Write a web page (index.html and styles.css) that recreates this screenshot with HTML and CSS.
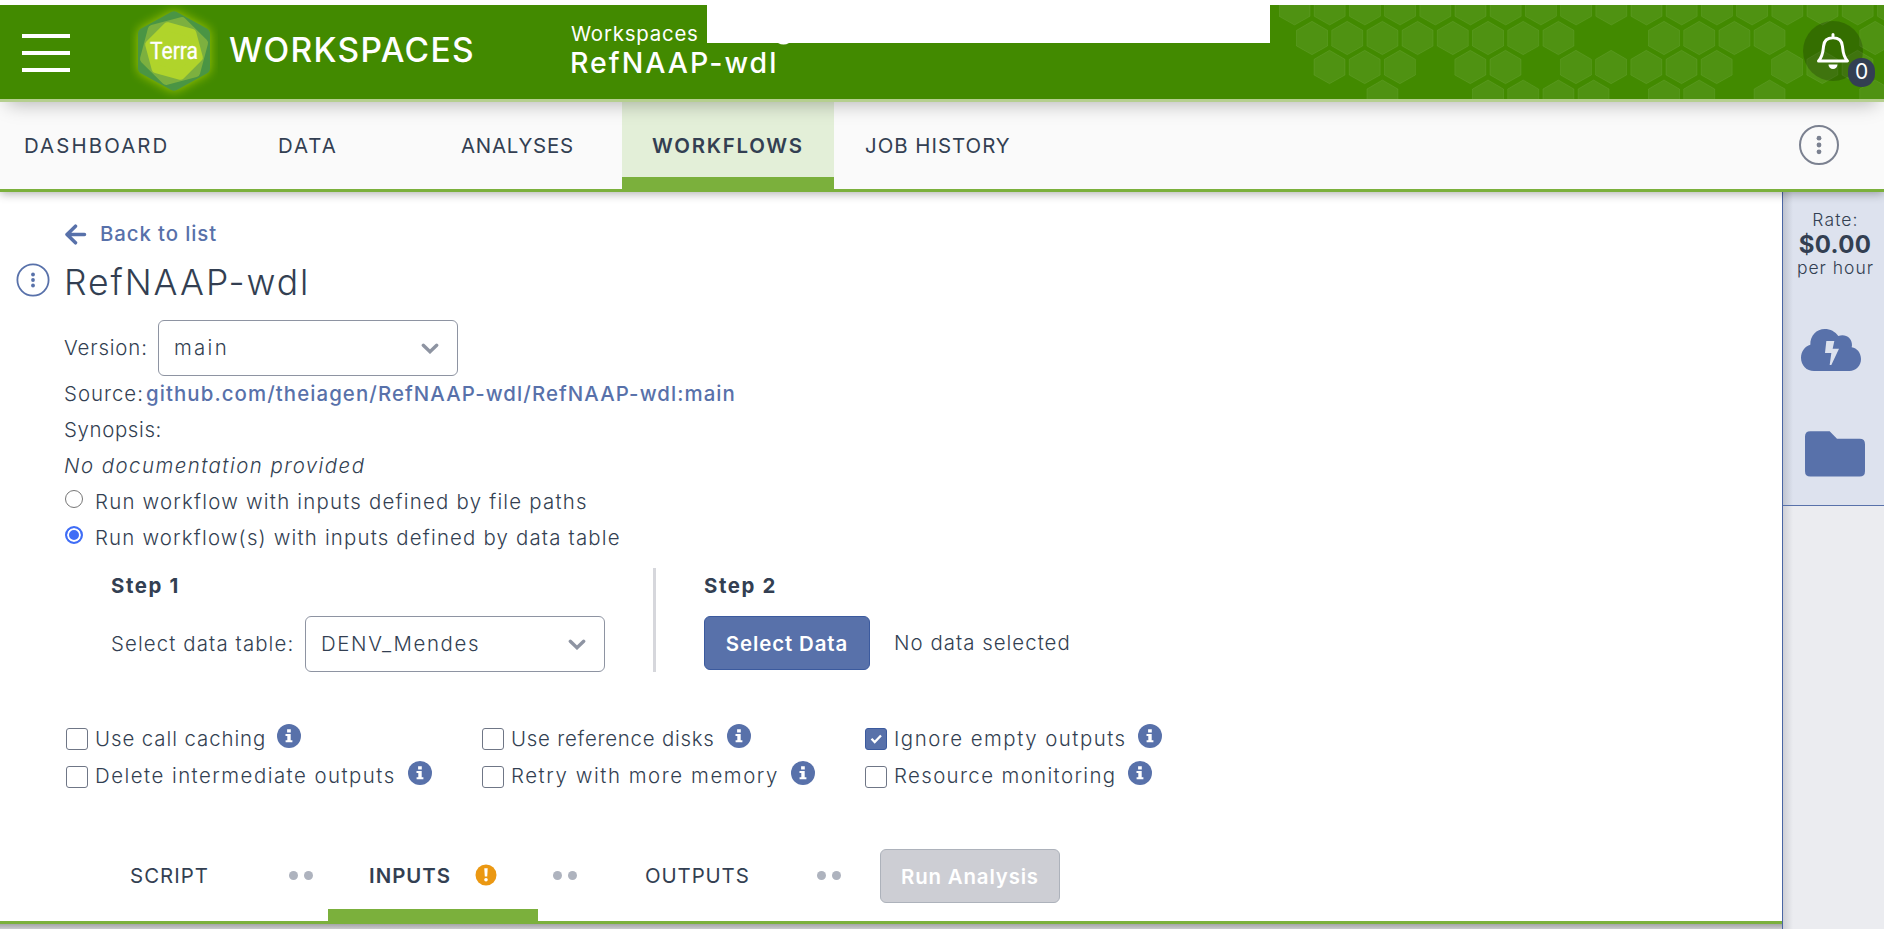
FILE: index.html
```html
<!DOCTYPE html>
<html lang="en">
<head>
<meta charset="utf-8">
<title>RefNAAP-wdl - Workflows</title>
<link rel="stylesheet" href="styles.css">
</head>
<body>
<svg class="defs" width="0" height="0">
  <defs>
    <path id="hex" d="M15.500 0L31 9V24.700L15.500 33.400L0 24.700V9Z"/>
    <g id="info"><circle cx="12" cy="12" r="12" fill="#5871aa"/><path fill="#fff" d="M10.100 5.300h3.700v3.200h-3.700zM8.500 10h5.200v6.200h1.700v2H8.600v-2h1.700V12H8.500z"/></g>
    <path id="chev" d="M2.300 2.300L9 8.700L15.700 2.300" fill="none" stroke="#8e94a2" stroke-width="3.400" stroke-linecap="round"/>
  </defs>
</svg>

<header class="topbar">
  <svg class="comb" width="605" height="94">
    <g transform="translate(0 -13.400)"><use href="#hex"/><use href="#hex" x="35.200"/><use href="#hex" x="70.400"/><use href="#hex" x="105.600"/><use href="#hex" x="140.800"/><use href="#hex" x="176"/><use href="#hex" x="211.200"/><use href="#hex" x="246.400"/><use href="#hex" x="281.600"/><use href="#hex" x="316.800"/><use href="#hex" x="352"/><use href="#hex" x="387.200"/><use href="#hex" x="422.400"/><use href="#hex" x="457.600"/><use href="#hex" x="492.800"/><use href="#hex" x="528"/><use href="#hex" x="563.200"/><use href="#hex" x="598.400"/></g>
    <g transform="translate(17.500 16.300)"><use href="#hex"/><use href="#hex" x="35.200"/><use href="#hex" x="70.400"/><use href="#hex" x="105.600"/><use href="#hex" x="140.800"/><use href="#hex" x="176"/><use href="#hex" x="211.200"/><use href="#hex" x="246.400"/><use href="#hex" x="352"/><use href="#hex" x="387.200"/><use href="#hex" x="422.400"/><use href="#hex" x="457.600"/><use href="#hex" x="563.200"/></g>
    <g transform="translate(35 45.300)"><use href="#hex"/><use href="#hex" x="35.200"/><use href="#hex" x="70.400"/><use href="#hex" x="140.800"/><use href="#hex" x="176"/><use href="#hex" x="246.400"/><use href="#hex" x="281.600"/><use href="#hex" x="316.800"/><use href="#hex" x="352"/><use href="#hex" x="387.200"/><use href="#hex" x="457.600"/><use href="#hex" x="492.800"/><use href="#hex" x="528"/></g>
    <g transform="translate(17.500 75)"><use href="#hex" x="70.400"/><use href="#hex" x="176"/><use href="#hex" x="211.200"/><use href="#hex" x="246.400"/><use href="#hex" x="281.600"/><use href="#hex" x="352"/><use href="#hex" x="387.200"/><use href="#hex" x="457.600"/><use href="#hex" x="563.200"/></g>
  </svg>
  <div class="burger"><i></i><i></i><i></i></div>
  <svg class="logo" width="88" height="94" viewBox="30 15 264 282">
    <g stroke-linejoin="round">
      <path class="glow" fill="#4a9544" stroke="#4a9544" stroke-width="36" d="M162 52L252 101V205L162 254L72 205V101Z"/>
      <path fill="#7cb03f" stroke="#7cb03f" stroke-width="28" transform="translate(162 153) rotate(15)" d="M0 -91L79 -45.500V45.500L0 91L-79 45.500V-45.500Z"/>
      <path fill="#b0d42b" stroke="#b0d42b" stroke-width="26" transform="translate(162 153) rotate(-15)" d="M0 -76L66 -38V38L0 76L-66 38V-38Z"/>
    </g>
    <text x="90" y="177" textLength="144" lengthAdjust="spacingAndGlyphs">Terra</text>
  </svg>
  <div class="section">WORKSPACES</div>
  <div class="crumb">
    <div class="crumb-top">Workspaces</div>
    <div class="crumb-name">RefNAAP-wdl</div>
  </div>
  <svg class="tail" width="12" height="4"><path d="M0 0Q5.500 3 11 0" fill="#fff"/></svg>
  <div class="alerts">
    <svg width="60" height="60" fill="none" stroke="#fff" stroke-width="3"><path d="M30 13.500v3M15.500 40C20 35.500 20 30.500 20.500 25.500C21 19.500 24 16.800 30 16.800S39 19.500 39.500 25.500C40 30.500 40 35.500 44.500 40Z" stroke-linecap="round" stroke-linejoin="round"/><path d="M25.500 43.500h9a4.500 4.500 0 0 1-9 0z" fill="#fff" stroke="none"/></svg>
    <span class="count">0</span>
  </div>
  <div class="mask"></div>
</header>

<nav class="tabs">
  <a class="tab t1">DASHBOARD</a>
  <a class="tab t2">DATA</a>
  <a class="tab t3">ANALYSES</a>
  <a class="tab t4 on">WORKFLOWS</a>
  <a class="tab t5">JOB HISTORY</a>
  <svg class="more" width="42" height="42"><circle cx="21" cy="21" r="19" fill="none" stroke="#7b8190" stroke-width="2"/><g fill="#7b8190"><circle cx="21" cy="14.200" r="2.400"/><circle cx="21" cy="21" r="2.400"/><circle cx="21" cy="27.800" r="2.400"/></g></svg>
</nav>

<div class="page">
  <main class="main">
    <div class="back"><svg width="23" height="21"><path d="M11.500 2.200L3 10.500L11.500 18.800M3.500 10.500H20.500" fill="none" stroke="#5871aa" stroke-width="3.500" stroke-linecap="round" stroke-linejoin="round"/></svg><span>Back to list</span></div>
    <div class="title"><svg width="34" height="34"><circle cx="17" cy="17" r="15.600" fill="none" stroke="#5871aa" stroke-width="1.800"/><g fill="#5871aa"><circle cx="17" cy="11.500" r="1.900"/><circle cx="17" cy="17" r="1.900"/><circle cx="17" cy="22.500" r="1.900"/></g></svg><span>RefNAAP-wdl</span></div>
    <div class="version"><span class="label l-version">Version:</span><div class="select"><span class="v-main">main</span><svg width="18" height="11"><use href="#chev"/></svg></div></div>
    <div class="line source"><span class="l-source">Source:</span><a>github.com/theiagen/RefNAAP-wdl/RefNAAP-wdl:main</a></div>
    <div class="line synopsis">Synopsis:</div>
    <div class="line nodoc">No documentation provided</div>
    <div class="line"><i class="radio"></i><span class="r1">Run workflow with inputs defined by file paths</span></div>
    <div class="line"><i class="radio checked"></i><span class="r2">Run workflow(s) with inputs defined by data table</span></div>

    <div class="steps">
      <section class="step1">
        <h4>Step 1</h4>
        <div class="row"><span class="label l-table">Select data table:</span><div class="select"><span class="v-table">DENV_Mendes</span><svg width="18" height="11"><use href="#chev"/></svg></div></div>
      </section>
      <section class="step2">
        <h4>Step 2</h4>
        <div class="row"><button class="btn select-data">Select Data</button><span class="none">No data selected</span></div>
      </section>
    </div>

    <div class="options">
      <div class="opt"><i class="box"></i><span class="o1">Use call caching</span><svg width="24" height="24"><use href="#info"/></svg></div>
      <div class="opt"><i class="box"></i><span class="o2">Use reference disks</span><svg width="24" height="24"><use href="#info"/></svg></div>
      <div class="opt"><i class="box ticked"><svg width="20" height="19"><path d="M5.500 9.800L8.700 13L15 6.500" fill="none" stroke="#fff" stroke-width="2.300"/></svg></i><span class="o3">Ignore empty outputs</span><svg width="24" height="24"><use href="#info"/></svg></div>
      <div class="opt"><i class="box"></i><span class="o4">Delete intermediate outputs</span><svg width="24" height="24"><use href="#info"/></svg></div>
      <div class="opt"><i class="box"></i><span class="o5">Retry with more memory</span><svg width="24" height="24"><use href="#info"/></svg></div>
      <div class="opt"><i class="box"></i><span class="o6">Resource monitoring</span><svg width="24" height="24"><use href="#info"/></svg></div>
    </div>

    <div class="flow">
      <div class="ftab f1">SCRIPT</div>
      <div class="dots"><i></i><i></i></div>
      <div class="ftab f2 on"><span>INPUTS</span><svg width="22" height="22"><circle cx="11" cy="11" r="10.500" fill="#eb9812"/><path d="M9.300 4.300h3.400l-.5 8.200H9.800z" fill="#fff"/><circle cx="11" cy="15.700" r="1.800" fill="#fff"/></svg></div>
      <div class="dots"><i></i><i></i></div>
      <div class="ftab f3">OUTPUTS</div>
      <div class="dots"><i></i><i></i></div>
      <button class="btn run">Run Analysis</button>
    </div>
    <div class="below"></div>
  </main>
  <aside class="side">
    <div class="side-top">
      <div class="rate">Rate:</div>
      <div class="cost">$0.00</div>
      <div class="per">per hour</div>
      <svg class="cloud" width="60" height="42" viewBox="111 417 180 126"><path fill="#5871aa" d="M150 543C128 543 111 526 111 503C111 484 123 468 139 464C138 437 158 417 182 417C199 417 214 425 223 438C243 430 265 443 264 466L263 472C279 474 291 489 291 507C291 527 276 543 256 543Z"/><path fill="#dde2ee" d="M187 453H211L206 476H225L202 525H197L202 489H183Z"/></svg>
      <svg class="folder" width="60" height="46" viewBox="123 724 180 137"><path fill="#5871aa" d="M139 724H197L219 747H287Q303 747 303 763V844Q303 860 287 860H139Q123 860 123 844V740Q123 724 139 724Z"/></svg>
    </div>
  </aside>
</div>
</body>
</html>
```

FILE: styles.css
```css
* { box-sizing: border-box; }
body {
  margin: 0;
  height: 929px;
  overflow: hidden;
  background: #fff;
  color: #333f52;
  font: 300 20.4px/36px "Inter", "Open Sans", sans-serif;
  white-space: nowrap;
}
svg { display: block; flex: none; }
.defs { position: absolute; }
i { display: block; flex: none; }

/* top bar */
.topbar {
  position: relative;
  z-index: 3;
  display: flex;
  height: 97px;
  margin-top: 5px;
  background: #428a00;
  border-bottom: 3px solid #b5cf8f;
  box-shadow: 0 9px 18px -7px rgba(0, 0, 0, .28);
  color: #fff;
}
.comb {
  position: absolute;
  right: 0;
  top: 0;
  fill: rgba(255, 255, 255, .07);
  stroke: rgba(255, 255, 255, .07);
}
.burger { width: 48px; margin: 29px 60px 0 22px; display: grid; gap: 13px; align-content: start; }
.burger i { height: 4px; background: #fff; }
.logo text { font: 400 74px "Roboto", sans-serif; fill: #fff; stroke: #fff; stroke-width: 1px; }
.glow { filter: drop-shadow(0 0 16px #a3c800); }
.section {
  width: 353px;
  padding-left: 11px;
  font-weight: 500;
  font-size: 33.5px;
  line-height: 90px;
  letter-spacing: 1.3px;
}
.crumb { position: relative; }
.crumb-top { margin-top: 15px; font-weight: 400; line-height: 28px; letter-spacing: .8px; }
.crumb-name { margin: 2px 0 0 -1px; font-weight: 500; font-size: 28.5px; line-height: 26px; letter-spacing: 2px; }
.mask { position: absolute; left: 707px; top: -5px; width: 563px; height: 43px; background: #fff; }
.tail { position: absolute; left: 778px; top: 38px; }
.alerts {
  position: relative;
  width: 60px;
  height: 60px;
  margin: 16px 21px 0 auto;
  border-radius: 50%;
  background: rgba(0, 0, 0, .2);
}
.count {
  position: absolute;
  left: 45px;
  top: 37px;
  width: 27px;
  height: 29px;
  border-radius: 13px;
  background: #333f52;
  font-weight: 400;
  font-size: 21px;
  line-height: 28px;
  text-align: center;
}

/* workspace tabs */
.tabs {
  position: relative;
  z-index: 2;
  display: flex;
  height: 90px;
  background: #fafafa;
  border-bottom: 3px solid #7bb03c;
  box-shadow: 0 2px 9px rgba(0, 0, 0, .3);
}
.tab { font-weight: 400; line-height: 87px; }
.t1 { width: 253px; padding-left: 24px; letter-spacing: 2.1px; }
.t2 { width: 207px; padding-left: 25px; letter-spacing: 2px; }
.t3 { width: 162px; padding-left: 1px; letter-spacing: .78px; }
.t4 { width: 212px; padding-left: 30px; letter-spacing: 1.75px; }
.t5 { padding-left: 31px; letter-spacing: 1px; }
.tab.on { height: 87px; font-weight: 600; background: #e3efd8; border-bottom: 12px solid #7bb03c; }
.more { margin: 22px 44px 0 auto; }

/* body */
.page { display: flex; height: 737px; }
.main { width: 1782px; overflow: hidden; }
.back { display: flex; align-items: center; height: 36px; margin: 24px 0 0 64px; color: #5871aa; font-weight: 500; letter-spacing: .9px; }
.back span { margin-left: 13px; }
.title { display: flex; height: 50px; margin: 5px 0 0 16px; font-size: 35.5px; line-height: 51px; letter-spacing: 1.95px; }
.title svg { margin: 6px 14px 0 0; }
.version { display: flex; align-items: center; height: 56px; margin: 13px 0 0 64px; }
.label { flex: none; }
.l-version { width: 94px; letter-spacing: .85px; }
.select {
  display: flex;
  align-items: center;
  justify-content: space-between;
  width: 300px;
  height: 56px;
  padding: 0 18px 0 15px;
  border: 1px solid #8e94a2;
  border-radius: 6px;
}
.v-main { letter-spacing: 2.3px; }
.v-table { letter-spacing: 1.65px; }
.line { display: flex; height: 36px; line-height: 38px; padding-left: 64px; }
.source { height: 35px; line-height: 36px; }
.l-source { width: 82px; letter-spacing: 1px; }
.source a { color: #5871aa; font-weight: 500; letter-spacing: 1.09px; }
.synopsis { letter-spacing: .65px; }
.nodoc { font-style: italic; letter-spacing: 1.47px; }
.radio { width: 18px; height: 18px; margin: 7px 12px 0 1px; border: 1.500px solid #767676; border-radius: 50%; background: #fff; }
.radio.checked { border: 2px solid #3f6df6; background: #3f6df6; box-shadow: inset 0 0 0 2px #fff; }
.r1 { letter-spacing: 1.22px; }
.r2 { letter-spacing: 1.18px; }

.steps { display: flex; height: 104px; margin: 13px 0 0 111px; }
.steps h4 { margin: 0; padding-bottom: 12px; font-size: 20.4px; font-weight: 700; line-height: 36px; letter-spacing: 1.6px; }
.row { display: flex; align-items: center; }
.step1 { width: 545px; border-right: 3px solid #d6d7dc; }
.l-table { width: 194px; letter-spacing: 1.12px; }
.step2 { padding-left: 48px; }
.btn { font: 600 20.4px "Inter", sans-serif; color: #fff; border-radius: 6px; padding: 0; height: 54px; }
.select-data { width: 166px; background: #5871aa; border: 1px solid #3b5a9e; letter-spacing: .9px; }
.none { margin-left: 24px; letter-spacing: 1.03px; }

.options { display: grid; grid-template-columns: 416px 383px 400px; grid-auto-rows: 37px; margin: 48px 0 0 66px; }
.opt { display: flex; line-height: 38px; }
.opt > svg { margin: 4px 0 0 11px; }
.box { width: 22px; height: 22px; margin: 8px 7px 0 0; border: 1.500px solid #6f7686; border-radius: 3px; }
.opt:nth-child(n+4) .box { margin-top: 9px; }
.box.ticked { background: #5871aa; border-color: #3b5a9e; }
.o1 { width: 171px; letter-spacing: .93px; }
.o2 { width: 205px; letter-spacing: .78px; }
.o3 { width: 233px; letter-spacing: 1.5px; }
.o4 { width: 302px; letter-spacing: 1.48px; }
.o5 { width: 269px; letter-spacing: 1.57px; }
.o6 { width: 223px; letter-spacing: 1.38px; }

.flow { display: flex; height: 95px; margin-top: 35px; padding-left: 64px; border-bottom: 3px solid #7bb03c; }
.ftab { height: 92px; font-weight: 400; line-height: 94px; }
.f1 { width: 225px; padding-left: 66px; letter-spacing: 1.05px; }
.f2 { display: flex; width: 210px; margin-left: 15px; padding-left: 41px; letter-spacing: 1px; }
.f2 span { width: 106px; }
.f2 svg { margin-top: 35px; }
.f2.on { font-weight: 600; border-bottom: 12px solid #7bb03c; }
.f3 { width: 240px; padding-left: 68px; letter-spacing: .9px; }
.dots { display: flex; gap: 6px; width: 24px; margin-top: 42px; }
.dots i { width: 9px; height: 9px; border-radius: 50%; background: #aeb3be; }
.f2 + .dots { margin-left: 15px; }
.run { width: 180px; margin: 20px 0 0 39px; background: #cdced4; border: 1px solid #adb2bb; letter-spacing: .85px; }
.below { height: 5px; background: linear-gradient(#a4a4a7, #cbcbce); }

/* side rail */
.side { flex: 1; background: linear-gradient(90deg, #cfd0d6, #ebecf0 10px); border-left: 1px solid #4a66a4; }
.side-top {
  display: flex;
  flex-direction: column;
  align-items: center;
  height: 314px;
  padding-top: 17px;
  background: linear-gradient(90deg, #bfc4d0, #dde2ee 10px);
  border-bottom: 1px solid #5871aa;
}
.rate { padding-left: 4px; font-size: 17.5px; line-height: 22px; letter-spacing: 1.1px; }
.cost { padding-left: 3px; font-weight: 700; font-size: 24px; line-height: 28px; letter-spacing: .33px; }
.per { padding-left: 4px; font-size: 17.5px; line-height: 18px; letter-spacing: 1px; }
.cloud { margin-top: 52px; margin-right: 6px; }
.folder { margin-top: 60px; margin-left: 3px; }
```
